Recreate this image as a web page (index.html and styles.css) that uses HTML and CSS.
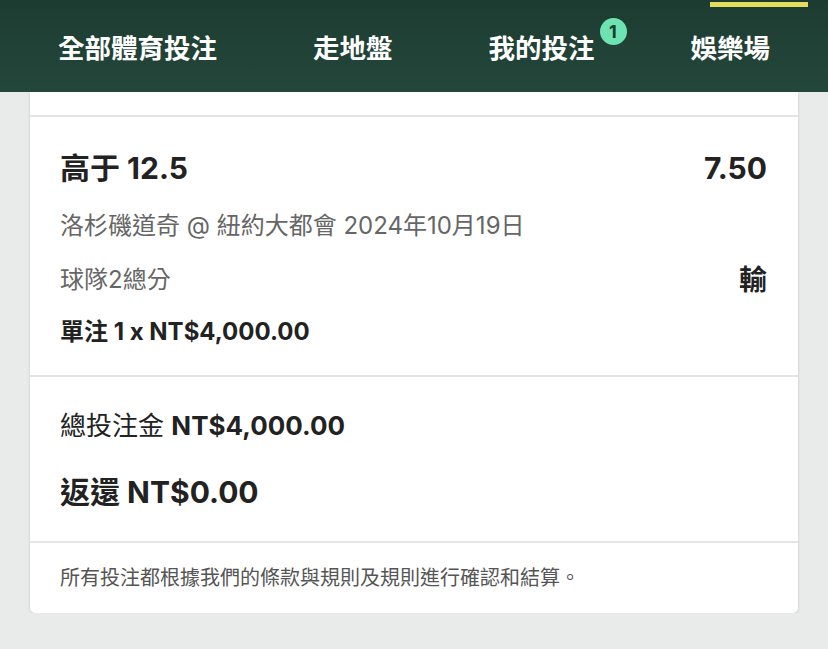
FILE: index.html
```html
<!DOCTYPE html>
<html lang="zh-Hant">
    <head>
        <meta charset="UTF-8" />
        <title>我的投注</title>
        <link rel="stylesheet" href="styles.css">
    </head>
    <body>
        <div class="topbar">
            <nav>
                <ul>
                    <li><a href="#">全部體育投注</a></li>
                    <li><a href="#">走地盤</a></li>
                    <li class="mybets"><a href="#">我的投注</a><span class="badge">1</span></li>
                    <li><a href="#">娛樂場</a></li>
                </ul>
            </nav>
            <div class="indicator"></div>
        </div>

        <div class="card">
            <div class="cardtop"></div>

            <div class="bet">
                <div class="row title">
                    <span>高于 12.5</span>
                    <span>7.50</span>
                </div>
                <div class="row sub">洛杉磯道奇 @ 紐約大都會 2024年10月19日</div>
                <div class="row market">
                    <span>球隊2總分</span>
                    <span class="result">輸</span>
                </div>
                <div class="row stake">單注 1 x NT$4,000.00</div>
            </div>

            <div class="totals">
                <div class="total">總投注金 <b>NT$4,000.00</b></div>
                <div class="return">返還 NT$0.00</div>
            </div>

            <div class="note">所有投注都根據我們的條款與規則及規則進行確認和結算。</div>
        </div>
    </body>
</html>
```

FILE: styles.css
```css
body
{
    margin: 0;
    background-color: #e9ebea;
    font-family: Inter, "Noto Sans CJK TC", sans-serif;
    color: #222;
}

.topbar
{
    position: relative;
    height: 92px;
    background: linear-gradient(#1d3c31, #24473b);
}

nav ul
{
    list-style-type: none;
    margin: 0;
    padding: 0 0 0 58px;
    display: flex;
    gap: 96px;
    height: 92px;
    align-items: center;
}

nav li
{
    position: relative;
}

nav a
{
    color: white;
    text-decoration: none;
    font-size: 26.5px;
    font-weight: 700;
    line-height: 30px;
    display: block;
    padding-top: 4px;
}

.badge
{
    position: absolute;
    left: calc(100% + 5px);
    top: -11px;
    width: 27px;
    height: 27px;
    border-radius: 50%;
    background-color: #6ee3b2;
    color: #1d3c31;
    font-size: 18px;
    font-weight: 700;
    line-height: 27px;
    text-align: center;
}

.indicator
{
    position: absolute;
    left: 710px;
    top: 2px;
    width: 98px;
    height: 5px;
    background-color: #e4dc5c;
}

.card
{
    margin: 0 30px;
    background-color: white;
    border-radius: 0 0 5px 5px;
    box-shadow: 0 1px 3px rgba(0, 0, 0, 0.15);
}

.cardtop
{
    height: 23px;
}

.bet
{
    border-top: 2px solid #e4e4e4;
    padding: 33px 31px 28px 30px;
}

.row
{
    display: flex;
    justify-content: space-between;
    align-items: center;
}

.title
{
    font-size: 30px;
    font-weight: 700;
    line-height: 36px;
}

.sub
{
    margin-top: 25px;
    font-size: 24px;
    line-height: 30px;
    color: #666;
}

.market
{
    margin-top: 24px;
    font-size: 24px;
    line-height: 30px;
    color: #666;
}

.result
{
    font-size: 28px;
    font-weight: 700;
    color: #222;
}

.stake
{
    margin-top: 22px;
    font-size: 24px;
    font-weight: 700;
    line-height: 30px;
}

.totals
{
    border-top: 2px solid #e4e4e4;
    padding: 33px 30px 31px 30px;
}

.total
{
    font-size: 26px;
    line-height: 32px;
}

.return
{
    margin-top: 32px;
    font-size: 30px;
    font-weight: 700;
    line-height: 36px;
}

.note
{
    border-top: 2px solid #e4e4e4;
    padding: 22px 30px;
    font-size: 20px;
    line-height: 26px;
    color: #555;
}
```
